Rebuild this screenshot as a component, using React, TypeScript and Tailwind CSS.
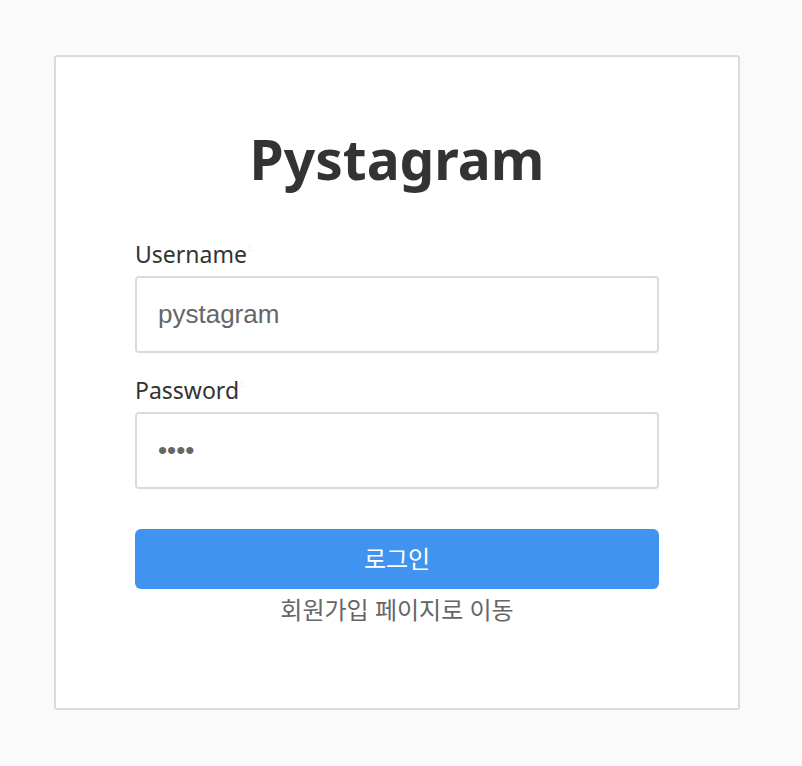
import React from "react";

function Field({ label, value, type }: { label: string; value: string; type: string }) {
  return (
    <div className="flex flex-col">
      <label className="text-[23px] leading-[32px] text-[#333]">
        {label}
        <span className="ml-[2px] align-top text-[9px] leading-[20px] text-[#d0d0d0]">:</span>
      </label>
      <input
        readOnly
        type={type}
        value={value}
        className="mt-[6px] h-[77px] w-full rounded-[4px] border-2 border-[#dbdbdb] bg-white px-[21px] text-[26px] text-[#666] outline-none [font-family:'Liberation_Sans',Arial,sans-serif]"
      />
    </div>
  );
}

export default function App() {
  return (
    <div className="min-h-[766px] w-full bg-[#fafafa] pt-[55px] [font-family:'Noto_Sans','Noto_Sans_CJK_KR',sans-serif]">
      <div className="ml-[54px] h-[655px] w-[686px] rounded-[3px] border-2 border-[#dbdbdb] bg-white px-[79px] pt-[62px]">
        <h1 className="text-center text-[55px] font-bold leading-[80px] text-[#333]">Pystagram</h1>
        <div className="mt-[39px] flex flex-col gap-[21px]">
          <Field label="Username" value="pystagram" type="text" />
          <Field label="Password" value="abcd" type="password" />
        </div>
        <button className="mt-[40px] h-[60px] w-full rounded-[6px] bg-[#4193f0] text-[24px] text-white">
          로그인
        </button>
        <div className="mt-[4px] text-center text-[24px] leading-[34px] text-[#666]">회원가입 페이지로 이동</div>
      </div>
    </div>
  );
}
